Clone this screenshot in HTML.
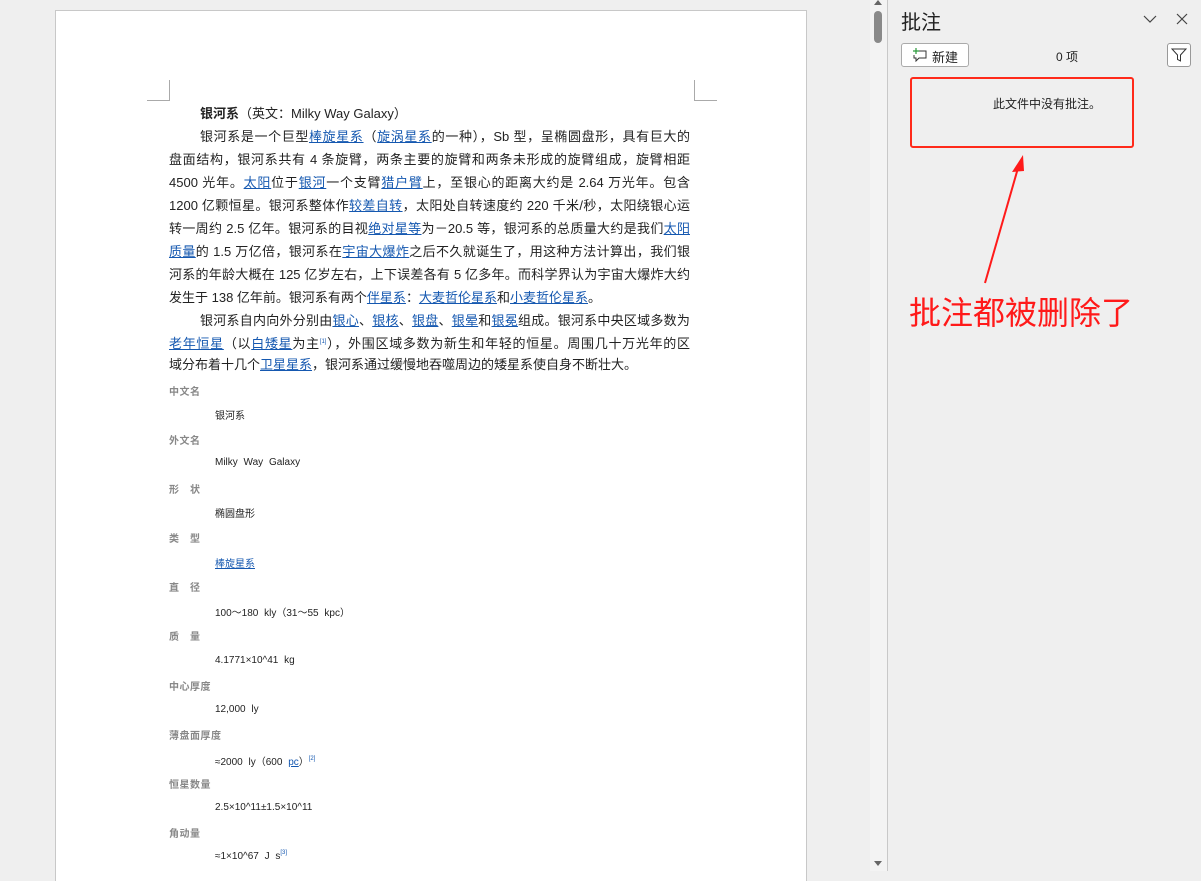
<!DOCTYPE html>
<html><head><meta charset="utf-8">
<style>
body{margin:0;width:1201px;height:871px;background:#efefef;position:relative;overflow:hidden;font-family:"Liberation Sans","Noto Sans CJK SC",sans-serif;}
.page{position:absolute;left:55px;top:10px;width:750px;height:870px;background:#fff;border:1px solid #c8c8c8;border-bottom:none}
.l{position:absolute;left:169px;width:521px;font-size:13px;color:#222;text-align:justify;text-align-last:justify;white-space:nowrap;line-height:16px}
.l.e{text-align-last:left}
a{color:#1558b0;text-decoration:underline}
.lab{position:absolute;left:169px;font-size:10px;color:#888;font-weight:bold;letter-spacing:0.5px}
.val{position:absolute;left:215px;font-size:10px;color:#222;word-spacing:3px}
.mark{position:absolute;border-color:#aaa;border-style:solid;width:22px;height:20px}
s{text-decoration:none;font-size:6px;color:#1558b0;position:relative;top:-5px;line-height:0}
</style></head><body>
<div class="page"></div>
<div class="mark" style="left:147px;top:80px;border-width:0 1px 1px 0"></div>
<div class="mark" style="left:694px;top:80px;border-width:0 0 1px 1px"></div>

<div class="l e" style="top:106px;left:200px;width:490px"><b>银河系</b>（英文：Milky Way Galaxy）</div>
<div class="l" style="top:129px;left:200px;width:490px">银河系是一个巨型<a>棒旋星系</a>（<a>旋涡星系</a>的一种），Sb 型，呈椭圆盘形，具有巨大的</div>
<div class="l" style="top:152px">盘面结构，银河系共有 4 条旋臂，两条主要的旋臂和两条未形成的旋臂组成，旋臂相距</div>
<div class="l" style="top:175px">4500 光年。<a>太阳</a>位于<a>银河</a>一个支臂<a>猎户臂</a>上，至银心的距离大约是 2.64 万光年。包含</div>
<div class="l" style="top:198px">1200 亿颗恒星。银河系整体作<a>较差自转</a>，太阳处自转速度约 220 千米/秒，太阳绕银心运</div>
<div class="l" style="top:221px">转一周约 2.5 亿年。银河系的目视<a>绝对星等</a>为－20.5 等，银河系的总质量大约是我们<a>太阳</a></div>
<div class="l" style="top:244px"><a>质量</a>的 1.5 万亿倍，银河系在<a>宇宙大爆炸</a>之后不久就诞生了，用这种方法计算出，我们银</div>
<div class="l" style="top:267px">河系的年龄大概在 125 亿岁左右，上下误差各有 5 亿多年。而科学界认为宇宙大爆炸大约</div>
<div class="l e" style="top:290px">发生于 138 亿年前。银河系有两个<a>伴星系</a>：<a>大麦哲伦星系</a>和<a>小麦哲伦星系</a>。</div>
<div class="l" style="top:313px;left:200px;width:490px">银河系自内向外分别由<a>银心</a>、<a>银核</a>、<a>银盘</a>、<a>银晕</a>和<a>银冕</a>组成。银河系中央区域多数为</div>
<div class="l" style="top:336px"><a>老年恒星</a>（以<a>白矮星</a>为主<s>[1]</s>），外围区域多数为新生和年轻的恒星。周围几十万光年的区</div>
<div class="l e" style="top:357px">域分布着十几个<a>卫星星系</a>，银河系通过缓慢地吞噬周边的矮星系使自身不断壮大。</div>

<div class="lab" style="top:383px">中文名</div><div class="val" style="top:407px">银河系</div>
<div class="lab" style="top:432px">外文名</div><div class="val" style="top:457px">Milky Way Galaxy</div>
<div class="lab" style="top:481px">形　状</div><div class="val" style="top:505px">椭圆盘形</div>
<div class="lab" style="top:530px">类　型</div><div class="val" style="top:555px"><a>棒旋星系</a></div>
<div class="lab" style="top:579px">直　径</div><div class="val" style="top:604px">100～180 kly（31～55 kpc）</div>
<div class="lab" style="top:628px">质　量</div><div class="val" style="top:655px">4.1771×10^41 kg</div>
<div class="lab" style="top:678px">中心厚度</div><div class="val" style="top:704px">12,000 ly</div>
<div class="lab" style="top:727px">薄盘面厚度</div><div class="val" style="top:753px">≈2000 ly（600 <a>pc</a>）<s>[2]</s></div>
<div class="lab" style="top:776px">恒星数量</div><div class="val" style="top:802px">2.5×10^11±1.5×10^11</div>
<div class="lab" style="top:825px">角动量</div><div class="val" style="top:851px">≈1×10^67 J s<s>[3]</s></div>

<!-- scrollbar -->
<div style="position:absolute;left:870px;top:0;width:17px;height:871px;background:#f3f3f3"></div>
<div style="position:absolute;left:874px;top:11px;width:8px;height:32px;background:#8a8a8a;border-radius:4px"></div>
<div style="position:absolute;left:874px;top:0;width:0;height:0;border-left:4px solid transparent;border-right:4px solid transparent;border-bottom:5px solid #666"></div>
<div style="position:absolute;left:874px;top:861px;width:0;height:0;border-left:4px solid transparent;border-right:4px solid transparent;border-top:5px solid #666"></div>
<div style="position:absolute;left:887px;top:0;width:1px;height:871px;background:#c8c8c8"></div>

<!-- panel -->
<div style="position:absolute;left:901px;top:6px;font-size:20px;color:#222">批注</div>
<svg style="position:absolute;left:1143px;top:14px" width="14" height="10"><path d="M1 2 L7 8 L13 2" fill="none" stroke="#444" stroke-width="1.2"/></svg>
<svg style="position:absolute;left:1176px;top:13px" width="12" height="12"><path d="M1 1 L11 11 M11 1 L1 11" stroke="#444" stroke-width="1.2"/></svg>
<div style="position:absolute;left:901px;top:43px;width:66px;height:22px;border:1px solid #aaa;border-radius:3px;background:#fff;font-size:13px;color:#222">
<svg style="position:absolute;left:10px;top:4px" width="16" height="14"><path d="M5 3 H14 V10 H7 L4 13 V10 H2 V7" fill="none" stroke="#333" stroke-width="1"/><path d="M4 0 V6 M1 3 H7" stroke="#2a9a3a" stroke-width="1.2"/></svg>
<span style="position:absolute;left:30px;top:3px">新建</span></div>
<div style="position:absolute;left:1056px;top:48px;font-size:12px;color:#222">0 项</div>
<div style="position:absolute;left:1167px;top:43px;width:22px;height:22px;border:1px solid #999;border-radius:3px;background:#fff">
<svg style="position:absolute;left:3px;top:3px" width="16" height="16"><path d="M1 2 H15 L9.5 8 V14 L6.5 12.5 V8 Z" fill="none" stroke="#333" stroke-width="1"/></svg></div>
<div style="position:absolute;left:910px;top:77px;width:220px;height:67px;border:2px solid #ff2a1a;border-radius:3px"></div>
<div style="position:absolute;left:993px;top:95px;font-size:12px;color:#222">此文件中没有批注。</div>
<svg style="position:absolute;left:980px;top:150px" width="50" height="140"><path d="M5 133 L38 18" stroke="#ff1a1a" stroke-width="2"/><path d="M43 5 L32 22 L44 21 Z" fill="#ff1a1a"/></svg>
<div style="position:absolute;left:909px;top:294px;font-size:32px;color:#ff1a1a;line-height:38px">批注都被删除了</div>
</body></html>
